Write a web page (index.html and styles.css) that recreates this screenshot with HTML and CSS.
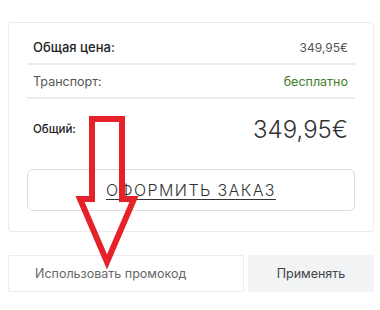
FILE: index.html
```html
<!DOCTYPE html>
<html lang="ru">
<head>
<meta charset="utf-8">
<link rel="stylesheet" href="styles.css">
</head>
<body>
<div class="page">
  <div class="card">
    <div class="row">
      <span class="label-strong">Общая цена:</span>
      <span class="value">349,95€</span>
    </div>
    <div class="row">
      <span class="label">Транспорт:</span>
      <span class="free">бесплатно</span>
    </div>
    <div class="total">
      <span class="total-label">Общий:</span>
      <span class="total-value">349,95€</span>
    </div>
    <button class="order">ОФОРМИТЬ ЗАКАЗ</button>
  </div>
  <div class="promo">
    <input class="promo-input" type="text" placeholder="Использовать промокод">
    <button class="apply">Применять</button>
  </div>
  <svg class="arrow" width="380" height="310" viewBox="0 0 380 310">
    <polygon points="92,119 122,119 122,199 134,199 107,262 80,199 92,199" fill="none" stroke="#e52229" stroke-width="6" stroke-linejoin="miter"/>
  </svg>
</div>
</body>
</html>
```
FILE: styles.css
```css
* { box-sizing: border-box; }
html, body { margin: 0; padding: 0; background: #fff; }
body { font-family: Inter, "Open Sans", sans-serif; color: #333; }
.page { position: relative; width: 380px; height: 310px; padding: 22px 7px 0 8px; }
.card {
  border: 1px solid #ebebeb;
  border-radius: 3px;
  padding: 8px 18px 20px 18px;
  width: 366px;
}
.row {
  display: flex;
  justify-content: space-between;
  align-items: center;
  height: 34px;
  padding: 0 7px 0 6px;
  border-bottom: 2px solid #ececec;
}
.label-strong { font-size: 13px; font-weight: 500; color: #222; }
.value { font-size: 12px; color: #555; }
.label { font-size: 12.5px; color: #555; }
.free { font-size: 12.5px; color: #3f7d2a; }
.total {
  display: flex;
  justify-content: space-between;
  align-items: center;
  height: 60px;
  padding: 0 7px 0 6px;
}
.total-label { font-size: 11.5px; font-weight: 500; color: #222; }
.total-value { font-size: 24px; font-weight: 300; color: #333; }
.order {
  display: block;
  width: 100%;
  height: 42px;
  margin-top: 10px;
  background: #fff;
  border: 1px solid #dcdcdc;
  border-radius: 6px;
  font-family: inherit;
  font-size: 16px;
  font-weight: 300;
  color: #333;
  text-decoration: underline;
  text-underline-offset: 3px;
  letter-spacing: 1.4px;
}
.promo {
  display: flex;
  gap: 4px;
  margin-top: 23px;
  width: 366px;
}
.promo-input {
  width: 236px;
  height: 37px;
  border: 1px solid #ececec;
  border-radius: 2px;
  padding: 0 0 0 26px;
  font-family: inherit;
  font-size: 12.5px;
  color: #666;
}
.promo-input::placeholder { color: #666; }
.apply {
  flex: 1;
  height: 37px;
  background: #f1f3f5;
  border: none;
  border-radius: 2px;
  font-family: inherit;
  font-size: 12.5px;
  color: #444;
}
.arrow { position: absolute; left: 0; top: 0; pointer-events: none; }
```
